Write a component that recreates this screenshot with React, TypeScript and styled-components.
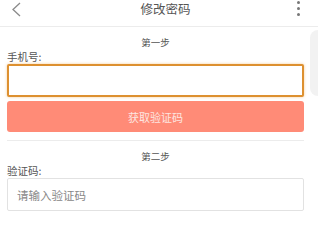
import React from "react";
import styled, { createGlobalStyle } from "styled-components";

const GlobalStyle = createGlobalStyle`
  html, body {
    margin: 0;
    padding: 0;
    background: #ffffff;
    font-family: "Noto Sans CJK SC", "Noto Sans", sans-serif;
    color: #555;
    overflow: hidden;
  }
`;

export default function App() {
  return (
    <>
      <GlobalStyle />
      <Page>
        <Header>
          <BackButton>
            <svg width="11" height="15" viewBox="0 0 11 15">
              <path d="M9 1 L2 7.5 L9 14" fill="none" stroke="#8a8a8a" strokeWidth="1.3" />
            </svg>
          </BackButton>
          <Title>修改密码</Title>
          <MoreButton>
            <Dot />
            <Dot />
            <Dot />
          </MoreButton>
        </Header>
        <Content>
          <StepTitle>第一步</StepTitle>
          <Label>手机号:</Label>
          <TextInput $focused />
          <SubmitButton>获取验证码</SubmitButton>
          <Divider />
          <StepTitle>第二步</StepTitle>
          <Label>验证码:</Label>
          <TextInput placeholder="请输入验证码" />
        </Content>
        <ScrollHint />
      </Page>
    </>
  );
}

const Page = styled.div`
  position: relative;
  width: 318px;
  height: 212px;
  overflow: hidden;
`;

const Header = styled.div`
  display: flex;
  align-items: flex-start;
  justify-content: space-between;
  height: 26px;
  padding: 0 18px 0 11px;
  border-bottom: 1px solid #ececec;
`;

const BackButton = styled.div`
  display: flex;
  margin-top: 2px;
`;

const Title = styled.div`
  font-size: 12.5px;
  line-height: 18px;
  color: #555;
  margin-left: 12px;
`;

const MoreButton = styled.div`
  display: flex;
  flex-direction: column;
  gap: 3px;
  margin-top: 1px;
`;

const Dot = styled.span`
  width: 3px;
  height: 3px;
  border-radius: 50%;
  background: #777;
`;

const Content = styled.div`
  display: flex;
  flex-direction: column;
  width: 297px;
  padding: 0 7px;
`;

const StepTitle = styled.div`
  text-align: center;
  font-size: 9.5px;
  color: #555;
  line-height: 14px;
  margin-top: 8px;
`;

const Label = styled.div`
  font-size: 10.5px;
  color: #555;
  line-height: 15px;
`;

const TextInput = styled.input<{ $focused?: boolean }>`
  box-sizing: border-box;
  width: 100%;
  height: 33px;
  padding: 0 9px;
  font-family: inherit;
  font-size: 11.5px;
  color: #555;
  outline: none;
  border-radius: 2px;
  border: ${(p) => (p.$focused ? "2px solid #dd9030" : "1px solid #e2e2e2")};
  box-shadow: ${(p) =>
    p.$focused ? "0 0 3px rgba(240, 170, 80, 0.6)" : "none"};
  &::placeholder {
    color: #888;
  }
`;

const SubmitButton = styled.div`
  display: flex;
  align-items: center;
  justify-content: center;
  height: 31px;
  margin-top: 4px;
  border-radius: 3px;
  background: #ff8b77;
  color: #fde6e0;
  font-size: 11px;
`;

const Divider = styled.div`
  height: 1px;
  background: #ececec;
  margin-top: 8px;
`;

const ScrollHint = styled.div`
  position: absolute;
  right: -8px;
  top: 30px;
  width: 16px;
  height: 66px;
  border-radius: 8px;
  background: #f2f2f2;
`;
